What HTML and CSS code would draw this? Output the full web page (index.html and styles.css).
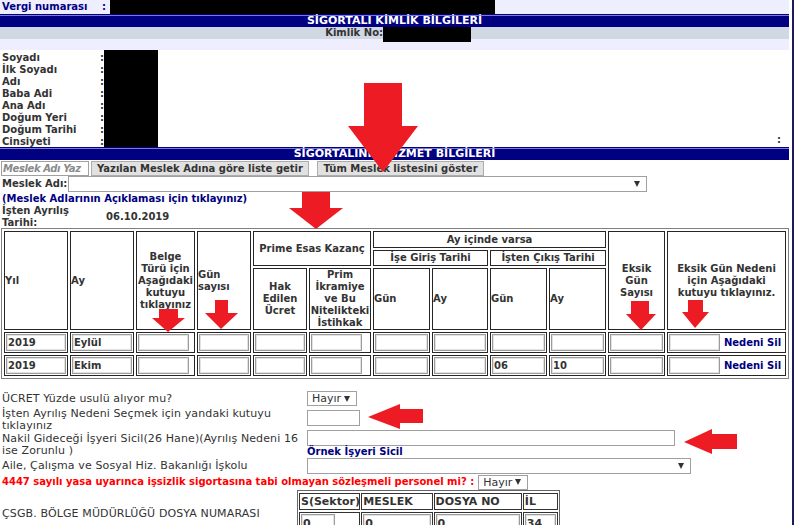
FILE: index.html
```html
<!DOCTYPE html>
<html lang="tr">
<head>
    <meta charset="utf-8">
    <title>Sigortalı Hizmet Bilgileri</title>
    <link rel="stylesheet" href="styles.css">
</head>
<body>
<div class="page">
    <div class="vergi-row">
        <span class="vergi-lbl">Vergi numarası</span><span class="vergi-colon">:</span><span class="mask vergi-mask"></span>
    </div>

    <div class="bar">SİGORTALI KİMLİK BİLGİLERİ</div>
    <div class="kimlik-row">
        <span class="kimlik-lbl">Kimlik No:</span><span class="mask kimlik-mask"></span>
    </div>
    <div class="lav-row"></div>

    <div class="person">
        <div class="p-labels">
            <div class="p-row"><span>Soyadı</span>:</div>
            <div class="p-row"><span>İlk Soyadı</span>:</div>
            <div class="p-row"><span>Adı</span>:</div>
            <div class="p-row"><span>Baba Adi</span>:</div>
            <div class="p-row"><span>Ana Adı</span>:</div>
            <div class="p-row"><span>Doğum Yeri</span>:</div>
            <div class="p-row"><span>Doğum Tarihi</span>:</div>
            <div class="p-row"><span>Cinsiyeti</span>:</div>
        </div>
        <div class="mask person-mask"></div>
        <div class="p-end">:</div>
    </div>

    <div class="bar">SİGORTALININ HİZMET BİLGİLERİ</div>

    <div class="search-row">
        <input class="meslek-q" type="text" placeholder="Meslek Adı Yaz">
        <button class="btn btn-getir">Yazılan Meslek Adına göre liste getir</button>
        <button class="btn btn-tum">Tüm Meslek listesini göster</button>
    </div>
    <div class="meslek-row">
        <span class="meslek-lbl">Meslek Adı:</span>
        <span class="sel sel-meslek"><select><option></option></select></span>
    </div>
    <a class="link aciklama" href="#">(Meslek Adlarının Açıklaması için tıklayınız)</a>
    <div class="tarih-row">
        <span class="tarih-lbl">İşten Ayrılış<br>Tarihi:</span>
        <span class="tarih-val">06.10.2019</span>
    </div>

    <table class="hizmet">
        <colgroup>
            <col class="c-yil"><col class="c-ay"><col class="c-belge"><col class="c-gun">
            <col class="c-hak"><col class="c-prim"><col class="c-g1"><col class="c-a1">
            <col class="c-g2"><col class="c-a2"><col class="c-eksik"><col class="c-neden">
        </colgroup>
        <tr class="r1">
            <th rowspan="3" class="l">Yıl</th>
            <th rowspan="3" class="l">Ay</th>
            <th rowspan="3">Belge Türü için Aşağıdaki kutuyu tıklayınız</th>
            <th rowspan="3" class="l">Gün sayısı</th>
            <th colspan="2" rowspan="2">Prime Esas Kazanç</th>
            <th colspan="4">Ay içinde varsa</th>
            <th rowspan="3">Eksik<br>Gün<br>Sayısı</th>
            <th rowspan="3">Eksik Gün Nedeni için Aşağıdaki kutuyu tıklayınız.</th>
        </tr>
        <tr class="r2">
            <th colspan="2">İşe Giriş Tarihi</th>
            <th colspan="2">İşten Çıkış Tarihi</th>
        </tr>
        <tr class="r3">
            <th>Hak Edilen Ücret</th>
            <th>Prim İkramiye ve Bu Nitelikteki İstihkak</th>
            <th class="l">Gün</th>
            <th class="l">Ay</th>
            <th class="l">Gün</th>
            <th class="l">Ay</th>
        </tr>
        <tr>
            <td><input type="text" value="2019"></td>
            <td><input type="text" value="Eylül"></td>
            <td><input class="w51" type="text"></td>
            <td><input type="text"></td>
            <td><input type="text"></td>
            <td><input class="w51" type="text"></td>
            <td><input type="text"></td>
            <td><input type="text"></td>
            <td><input type="text"></td>
            <td><input type="text"></td>
            <td><input type="text"></td>
            <td><div class="neden"><input class="w51" type="text"><a class="link" href="#">Nedeni Sil</a></div></td>
        </tr>
        <tr>
            <td><input type="text" value="2019"></td>
            <td><input type="text" value="Ekim"></td>
            <td><input class="w51" type="text"></td>
            <td><input type="text"></td>
            <td><input type="text"></td>
            <td><input class="w51" type="text"></td>
            <td><input type="text"></td>
            <td><input type="text"></td>
            <td><input type="text" value="06"></td>
            <td><input type="text" value="10"></td>
            <td><input type="text"></td>
            <td><div class="neden"><input class="w51" type="text"><a class="link" href="#">Nedeni Sil</a></div></td>
        </tr>
    </table>

    <div class="form">
        <div class="f-row f-ucret">
            <div class="f-lbl">ÜCRET Yüzde usulü alıyor mu?</div>
            <span class="sel sel-small"><select><option>Hayır</option></select></span>
        </div>
        <div class="f-row f-neden">
            <div class="f-lbl">İşten Ayrılış Nedeni Seçmek için yandaki kutuyu tıklayınız</div>
            <input class="txt txt-neden" type="text">
        </div>
        <div class="f-row f-nakil">
            <div class="f-lbl">Nakil Gideceği İşyeri Sicil(26 Hane)(Ayrılış Nedeni 16 ise Zorunlu )</div>
            <div class="f-stack">
                <input class="txt txt-nakil" type="text">
                <a class="link ornek" href="#">Örnek İşyeri Sicil</a>
            </div>
        </div>
        <div class="f-row f-iskolu">
            <div class="f-lbl">Aile, Çalışma ve Sosyal Hiz. Bakanlığı İşkolu</div>
            <span class="sel sel-iskolu"><select><option></option></select></span>
        </div>
        <div class="f-row f-4447">
            <span class="warn">4447 sayılı yasa uyarınca işsizlik sigortasına tabi olmayan sözleşmeli personel mi? :</span>
            <span class="sel sel-small"><select><option>Hayır</option></select></span>
        </div>
        <div class="f-row f-dosya">
            <div class="f-lbl dosya-lbl">ÇSGB. BÖLGE MÜDÜRLÜĞÜ DOSYA NUMARASI</div>
            <table class="dosya">
                <colgroup><col class="d-c1"><col class="d-c2"><col class="d-c3"><col class="d-c4"></colgroup>
                <tr><th>S(Sektor)</th><th>MESLEK</th><th>DOSYA NO</th><th>İL</th></tr>
                <tr>
                    <td><input class="d-s" type="text" value="0"></td>
                    <td><input type="text" value="0"></td>
                    <td><input type="text" value="0"></td>
                    <td><input type="text" value="34"></td>
                </tr>
            </table>
        </div>
    </div>

    <!-- kirmizi isaret oklari -->
    <svg class="arrows" width="789" height="525" viewBox="0 0 789 525">
        <g fill="#ed1c24">
            <polygon points="364,83 402,83 402,126 418,126 383,172 348,126 364,126"/>
            <polygon points="302,192 330,192 330,208 343,208 316,229 289,208 302,208"/>
            <polygon points="159,309 178,309 178,318 185,318 168,332 152,318 159,318"/>
            <polygon points="215,300 228,300 228,313 238,313 221,329 205,313 215,313"/>
            <polygon points="631,301 649,301 649,314 656,314 641,330 626,314 631,314"/>
            <polygon points="688,300 703,300 703,312 709,312 695,328 682,312 688,312"/>
            <polygon points="368,417 400,404 400,409 423,409 423,423 400,423 400,429"/>
            <polygon points="684,442 712,429 712,434 737,434 737,449 712,449 712,454"/>
        </g>
    </svg>
</div>
</body>
</html>
```

FILE: styles.css
```css
* {
    box-sizing: border-box;
}
body {
    margin: 0;
    width: 794px;
    min-height: 525px;
    border-right: 2px solid #1b1b5c;
    background: #fff;
    font-family: "DejaVu Sans", Verdana, sans-serif;
    font-size: 10px;
    font-weight: bold;
    color: #333;
}
input, select, button {
    font-family: "DejaVu Sans", Verdana, sans-serif;
    margin: 0;
}
.page {
    position: relative;
    width: 789px;
}
.mask {
    display: block;
    background: #000;
}

/* kimlik bilgileri */
.vergi-row {
    display: flex;
    height: 14px;
    line-height: 14px;
    background: #eeeeff;
    color: #000080;
}
.vergi-lbl {
    width: 102px;
    padding-left: 2px;
}
.vergi-colon {
    width: 8px;
}
.vergi-mask {
    width: 385px;
}
.bar {
    height: 13px;
    border-top: 1px solid #000080;
    background: #000080;
    box-shadow: inset 0 1px 0 #7b7bd3;
    color: #fff;
    font-size: 11px;
    line-height: 12px;
    text-align: center;
}
.kimlik-row {
    display: flex;
    height: 12px;
    line-height: 12px;
    background: #cfd8e3;
}
.kimlik-lbl {
    width: 383px;
    text-align: right;
}
.kimlik-mask {
    width: 88px;
    height: 15px;
}
.lav-row {
    height: 11px;
    background: #eeeeff;
}
.person {
    display: flex;
    height: 97px;
}
.p-labels {
    width: 104px;
    padding-top: 2px;
    line-height: 12px;
}
.p-row {
    display: flex;
}
.p-row span {
    width: 101px;
    padding-left: 2px;
}
.person-mask {
    width: 54px;
}
.p-end {
    flex: 1;
    display: flex;
    align-items: flex-end;
    justify-content: flex-end;
    padding-right: 8px;
    padding-bottom: 1px;
    line-height: 12px;
}

/* hizmet bilgileri */
.search-row {
    display: flex;
    align-items: flex-start;
    height: 16px;
    padding-top: 1px;
}
.meslek-q {
    margin-left: 1px;
    width: 88px;
    height: 15px;
    padding: 0 0 0 1px;
    border: 1px solid #a0a0a0;
    font-size: 10px;
    font-style: italic;
    font-weight: bold;
    letter-spacing: -0.4px;
    color: #333;
}
.meslek-q::placeholder {
    color: #8a8a8a;
}
.btn {
    height: 15px;
    padding: 0;
    border: 1px solid #adadad;
    background: #e1e1e1;
    font-size: 10px;
    font-weight: bold;
    line-height: 13px;
    color: #333;
}
.btn-getir {
    margin-left: 2px;
    width: 218px;
}
.btn-tum {
    margin-left: 8px;
    width: 167px;
}
.meslek-row {
    display: flex;
    align-items: flex-start;
    height: 17px;
}
.meslek-lbl {
    width: 68px;
    padding-left: 2px;
    line-height: 16px;
}
.sel {
    position: relative;
    display: block;
}
.sel select {
    -webkit-appearance: none;
    appearance: none;
    width: 100%;
    height: 100%;
    padding: 0 0 0 4px;
    border: 1px solid #a0a0a0;
    border-radius: 0;
    background: #fff;
    font-size: 11px;
    font-weight: normal;
    color: #333;
}
.sel::after {
    content: "";
    position: absolute;
    right: 7px;
    top: 50%;
    margin-top: -3px;
    border-left: 3px solid transparent;
    border-right: 3px solid transparent;
    border-top: 6px solid #333;
}
.sel-meslek {
    width: 579px;
    height: 16px;
}
.link {
    color: #000080;
    font-weight: bold;
    text-decoration: none;
}
.aciklama {
    display: block;
    padding-left: 2px;
    line-height: 12px;
}
.tarih-row {
    display: flex;
    align-items: center;
    line-height: 11.5px;
}
.tarih-lbl {
    width: 106px;
    padding-left: 2px;
}

/* tablo */
.hizmet {
    width: 788px;
    margin-left: 1px;
    border: 1px solid #808080;
    border-spacing: 2px;
    table-layout: fixed;
}
.hizmet th,
.hizmet td {
    border: 1px solid #262626;
    padding: 0;
    font-size: 10px;
    line-height: 12px;
    text-align: center;
    vertical-align: middle;
}
.hizmet th.l {
    text-align: left;
}
.hizmet td {
    padding: 1px;
    text-align: left;
}
.hizmet .r1 {
    height: 17px;
}
.hizmet .r2 {
    height: 16px;
}
.hizmet .r3 {
    height: 62px;
}
.c-yil, .c-ay { width: 64px; }
.c-belge { width: 59px; }
.c-gun, .c-hak { width: 54px; }
.c-prim { width: 62px; }
.c-g1, .c-g2, .c-a2, .c-eksik { width: 57px; }
.c-a1 { width: 56px; }
.c-neden { width: 119px; }
.hizmet input,
.dosya input {
    display: block;
    width: 100%;
    height: 17px;
    padding: 0 1px;
    border: 1px solid #9c9c9c;
    box-shadow: inset 0 0 0 1px #e2e2e2;
    font-size: 10px;
    font-weight: bold;
    color: #333;
}
.hizmet input.w51 {
    width: 51px;
}
.neden {
    display: flex;
    align-items: center;
    justify-content: space-between;
    padding-right: 3px;
}

/* alt form */
.form {
    margin-top: 12px;
    font-size: 11px;
    font-weight: normal;
    line-height: 12px;
}
.f-row {
    display: flex;
    align-items: center;
}
.f-lbl {
    flex-shrink: 0;
    width: 307px;
    padding-left: 2px;
    letter-spacing: 0.12px;
}
.f-ucret { height: 15px; }
.f-neden {
    height: 24px;
    align-items: flex-start;
}
.f-neden .f-lbl {
    padding-top: 2px;
}
.f-neden .txt {
    margin-top: 4px;
}
.f-nakil {
    height: 28px;
    align-items: flex-start;
}
.f-nakil .f-lbl {
    padding-top: 3px;
}
.f-iskolu { height: 16px; }
.f-4447 { height: 16px; }
.sel-small {
    width: 50px;
    height: 15px;
}
.sel-iskolu {
    width: 384px;
    height: 16px;
}
.txt {
    height: 16px;
    padding: 0 2px;
    border: 1px solid #a0a0a0;
    background: #fff;
}
.txt-neden {
    width: 53px;
}
.txt-nakil {
    width: 368px;
}
.ornek {
    display: block;
    font-size: 10px;
    line-height: 12px;
}
.warn {
    padding-left: 2px;
    margin-right: 4px;
    color: #f00;
    font-size: 10px;
    font-weight: bold;
}
.dosya-lbl {
    width: 297px;
}
.dosya {
    width: 263px;
    border: 1px solid #666;
    border-spacing: 1px 2px;
    table-layout: fixed;
}
.dosya th {
    height: 17px;
    padding: 0 1px;
    border: 1px solid #333;
    font-size: 11px;
    text-align: left;
    white-space: nowrap;
}
.dosya td {
    padding: 1px;
    border: 1px solid #333;
}
.dosya input {
    height: 18px;
    font-size: 11px;
}
.dosya input.d-s {
    width: 34px;
}
.d-c1 { width: 61px; }
.d-c2 { width: 71px; }
.d-c3 { width: 88px; }
.d-c4 { width: 35px; }

.arrows {
    position: absolute;
    top: 0;
    left: 0;
    pointer-events: none;
}
```
